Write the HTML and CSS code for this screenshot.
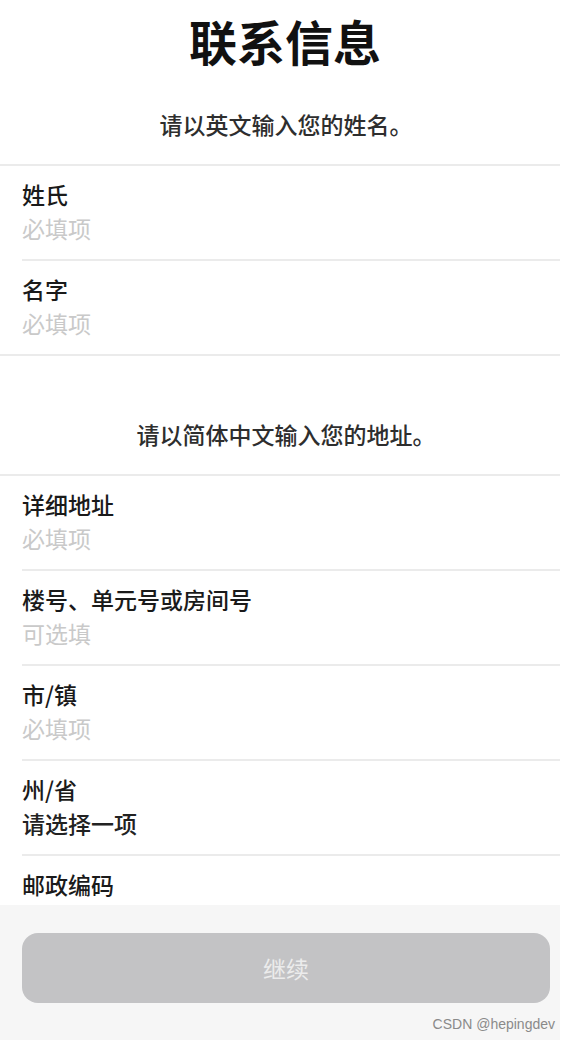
FILE: index.html
```html
<!DOCTYPE html>
<html lang="zh-CN">
<head>
    <meta charset="UTF-8">
    <meta name="viewport" content="width=device-width, initial-scale=1.0">
    <title>联系信息</title>
    <link rel="stylesheet" href="styles.css">
</head>
<body>
    <div class="page">
        <h1 class="title">联系信息</h1>

        <!-- 姓名 -->
        <p class="intro">请以英文输入您的姓名。</p>
        <div class="group">
            <div class="row">
                <div class="row-body">
                    <div class="label">姓氏</div>
                    <div class="placeholder">必填项</div>
                </div>
            </div>
            <div class="row">
                <div class="row-body">
                    <div class="label">名字</div>
                    <div class="placeholder">必填项</div>
                </div>
            </div>
        </div>

        <!-- 地址 -->
        <p class="intro intro-spaced">请以简体中文输入您的地址。</p>
        <div class="group">
            <div class="row">
                <div class="row-body">
                    <div class="label">详细地址</div>
                    <div class="placeholder">必填项</div>
                </div>
            </div>
            <div class="row">
                <div class="row-body">
                    <div class="label">楼号、单元号或房间号</div>
                    <div class="placeholder">可选填</div>
                </div>
            </div>
            <div class="row">
                <div class="row-body">
                    <div class="label">市/镇</div>
                    <div class="placeholder">必填项</div>
                </div>
            </div>
            <div class="row">
                <div class="row-body">
                    <div class="label">州/省</div>
                    <div class="value">请选择一项</div>
                </div>
            </div>
            <div class="row">
                <div class="row-body">
                    <div class="label">邮政编码</div>
                    <div class="placeholder">必填项</div>
                </div>
            </div>
        </div>
    </div>

    <div class="footer">
        <button type="button" class="btn" disabled>继续</button>
        <div class="watermark">CSDN @hepingdev</div>
    </div>
</body>
</html>
```

FILE: styles.css
```css
* {
    margin: 0;
    padding: 0;
    box-sizing: border-box;
}

body {
    font-family: "Noto Sans CJK SC", "Noto Sans", sans-serif;
    background: white;
    color: #1a1a1a;
    height: 100vh;
    overflow: hidden;
}

.page {
    width: 560px;
}

.title {
    font-size: 48px;
    font-weight: 700;
    line-height: 60px;
    text-align: center;
    padding: 10px 0 0 10px;
    color: #111;
}

.intro {
    font-size: 23px;
    font-weight: 500;
    line-height: 34px;
    text-align: center;
    padding: 0 0 23px 12px;
    margin-top: 37px;
    color: #2e2e2e;
}

.intro-spaced {
    margin-top: 61px;
}

.group {
    border-top: 2px solid #ebebeb;
    border-bottom: 2px solid #ebebeb;
}

.row {
    padding-left: 22px;
}

.row-body {
    padding: 11px 0 14px;
    border-top: 2px solid #ebebeb;
}

.row:first-child .row-body {
    border-top: none;
}

.label,
.placeholder,
.value {
    font-size: 23px;
    line-height: 34px;
}

.label {
    font-weight: 500;
    color: #1a1a1a;
}

.placeholder {
    color: #c9c9c9;
}

.value {
    font-weight: 500;
    color: #222;
}

.footer {
    position: fixed;
    left: 0;
    bottom: 0;
    width: 560px;
    height: 135px;
    background: #f6f6f6;
    padding: 28px 10px 0 22px;
}

.btn {
    display: block;
    width: 100%;
    height: 70px;
    border: none;
    border-radius: 16px;
    background: #c3c3c5;
    color: #ececec;
    font-family: "Noto Sans CJK SC", "Noto Sans", sans-serif;
    font-size: 23px;
}

.watermark {
    font-family: "Liberation Sans", Arial, sans-serif;
    font-size: 14px;
    line-height: 20px;
    color: #8a8a8a;
    text-align: right;
    margin-top: 11px;
    margin-right: -5px;
}
```
